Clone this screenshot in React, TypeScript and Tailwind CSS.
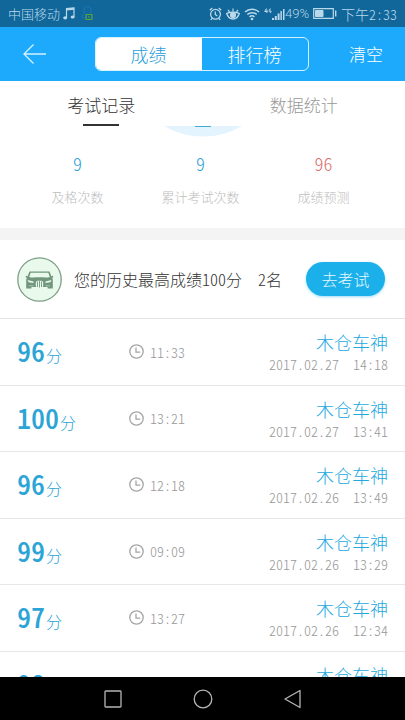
import React from "react";

type ScoreRecord = {
  score: number;
  duration: string;
  rank: string;
  date: string;
  time: string;
};

const records: ScoreRecord[] = [
  { score: 96, duration: "11:33", rank: "木仓车神", date: "2017.02.27", time: "14:18" },
  { score: 100, duration: "13:21", rank: "木仓车神", date: "2017.02.27", time: "13:41" },
  { score: 96, duration: "12:18", rank: "木仓车神", date: "2017.02.26", time: "13:49" },
  { score: 99, duration: "09:09", rank: "木仓车神", date: "2017.02.26", time: "13:29" },
  { score: 97, duration: "13:27", rank: "木仓车神", date: "2017.02.26", time: "12:34" },
  { score: 98, duration: "12:05", rank: "木仓车神", date: "2017.02.26", time: "11:52" },
];

const stats = [
  { value: "9", label: "及格次数", color: "text-[#35a3d8]" },
  { value: "9", label: "累计考试次数", color: "text-[#35a3d8]" },
  { value: "96", label: "成绩预测", color: "text-[#d9716f]" },
];

function StatusBar() {
  return (
    <div className="flex h-[27px] shrink-0 items-center justify-between bg-[#11679a] px-2 text-[13px] text-[#b9d9ea]">
      <div className="flex items-center gap-[3px]">
        <span>中国移动</span>
        <svg width="12" height="13" viewBox="0 0 12 13" fill="none" stroke="currentColor" aria-hidden="true">
          <path d="M3.5 10.5V1.5L11 .8v9" strokeWidth="1.2" />
          <path d="M3.5 2.4L11 1.7" strokeWidth="2" />
          <ellipse cx="2.2" cy="10.8" rx="2" ry="1.6" fill="currentColor" stroke="none" />
          <ellipse cx="9.6" cy="10" rx="2" ry="1.6" fill="currentColor" stroke="none" />
        </svg>
        <svg width="18" height="17" viewBox="0 0 18 17" fill="none" className="ml-[2px]" aria-hidden="true">
          <path d="M5 13H3.500L1.500 12 4 8.500V5a3.500 3.500 0 0 1 7 0v3" stroke="#1478b8" />
          <rect x="6" y="9.500" width="6" height="5" rx=".5" stroke="#5aa53c" strokeWidth="1.200" />
          <path d="M8 12h2" stroke="#5aa53c" />
        </svg>
      </div>
      <div className="flex items-center gap-1">
        <svg width="13" height="14" viewBox="0 0 13 14" fill="none" stroke="currentColor" strokeWidth="1.300" aria-hidden="true">
          <circle cx="6.500" cy="7.300" r="4.900" />
          <path d="M6.300 4.500v3l2 1.500M.8 3.300L3.300 1M12.200 3.300L9.700 1M3 11.300l-1.200 1.700M10 11.300l1.200 1.700" />
        </svg>
        <svg width="14" height="14" viewBox="0 0 14 14" fill="none" stroke="currentColor" strokeWidth="1.400" aria-hidden="true">
          <path d="M.7 6.500C1.500 9 3.500 12 7 12s5.500-3 6.300-5.500C11 4.800 3 4.800.7 6.500z" />
          <circle cx="7" cy="8" r="2.400" fill="currentColor" />
          <path d="M7 4.500V1.500M3.500 4.800L2 2.800M10.500 4.800L12 2.800" strokeWidth="1.200" />
        </svg>
        <svg width="16" height="14" viewBox="0 0 16 14" fill="none" stroke="currentColor" strokeWidth="1.500" aria-hidden="true">
          <path d="M1 5C4.800 1.300 11.200 1.300 15 5M3.300 7.500c2.600-2.500 6.800-2.500 9.400 0M5.500 9.900c1.400-1.300 3.600-1.300 5 0" />
          <circle cx="8" cy="12" r="1.300" fill="currentColor" stroke="none" />
        </svg>
        <svg width="21" height="14" viewBox="0 0 21 14" fill="currentColor" aria-hidden="true">
          <path d="M2.500 1.500L.7 4.500H3.500M2.900 2.500V6M7 2.200C4.500 1 4.500 6 7 5.300V4H6" fill="none" stroke="currentColor" />
          <path d="M8 11h2v2H8zM10.800 9h2v4h-2zM13.600 6.500h2V13h-2zM16.400 4h1.500v9h-1.500zM19 2h1.500v11H19z" />
        </svg>
        <span className="-ml-1 font-['Roboto',sans-serif] text-[13px]">49%</span>
        <svg width="24" height="11" viewBox="0 0 24 11" fill="none" stroke="currentColor" aria-hidden="true">
          <path d="M.7.700h19.600v9.600H.7z" strokeWidth="1.200" />
          <path d="M2.500 2.500h7.500v6h-7.500z" fill="currentColor" />
          <path d="M22.700 2.500v6" strokeWidth="1.400" />
        </svg>
        <span className="text-sm">下午2:33</span>
      </div>
    </div>
  );
}

function Header() {
  return (
    <header className="flex h-[54px] shrink-0 items-center justify-between bg-[#1eaafc] pl-[23px] pr-[21px] text-lg text-white">
      <button type="button" aria-label="返回" className="w-6">
        <svg width="24" height="22" viewBox="0 0 24 22" fill="none" stroke="#d5f2ff" strokeWidth="1.300" aria-hidden="true">
          <path d="M10.500 1.500L1 11l9.500 9.500M1 11h22" />
        </svg>
      </button>
      <div className="ml-2 flex h-[34px] w-[214px] overflow-hidden rounded-md border border-[#d5f2ff]">
        <button type="button" aria-pressed="true" className="flex-1 bg-white leading-8 text-[#2b9dd9]">
          成绩
        </button>
        <button type="button" aria-pressed="false" className="flex-1 leading-8">
          排行榜
        </button>
      </div>
      <button type="button" className="w-9 text-[17px]">清空</button>
    </header>
  );
}

function Tabs() {
  return (
    <div role="tablist" className="grid h-[45px] shrink-0 grid-cols-2 bg-white text-[17px]">
      <button type="button" role="tab" aria-selected="true" className="flex flex-col items-center justify-between pt-3 leading-6 text-[#333]">
        考试记录
        <span className="h-[2px] w-9 bg-[#333]" />
      </button>
      <button type="button" role="tab" aria-selected="false" className="flex flex-col items-center pt-3 leading-6 text-[#999]">
        数据统计
      </button>
    </div>
  );
}

function Summary() {
  return (
    <section className="h-[102px] shrink-0">
      <svg width="78" height="11" viewBox="0 0 78 11" className="mx-auto block" aria-hidden="true">
        <path d="M0 0h78a77 77 0 0 1-78 0z" fill="#e3f4fe" />
        <path d="M31 0h16v1H31z" fill="#45abd0" />
      </svg>
      <dl className="grid grid-cols-3 pl-4 pr-5">
        {stats.map((s) => (
          <div key={s.label} className="flex flex-col-reverse items-center gap-3 pt-[14px]">
            <dt className="text-[13px] leading-5 text-[#bdbdbd]">{s.label}</dt>
            <dd className={`text-lg leading-6 ${s.color}`}>{s.value}</dd>
          </div>
        ))}
      </dl>
    </section>
  );
}

function BestScore() {
  return (
    <section className="flex h-[79px] shrink-0 items-center border-b border-[#e0e4e5] pl-[17px] pr-5">
      <svg width="45" height="45" viewBox="0 0 45 45" fill="none" aria-hidden="true">
        <circle cx="22.500" cy="22.500" r="21.700" fill="#e9faed" stroke="#7d9f88" strokeWidth="1.300" />
        <path
          fill="#71967d"
          d="M12.500 14.500h20l2 5 1-.7c1.200.2.900 1.800-.2 2l.5 2.200v8.500h-5.200v-1.500H14.400v1.500H9.200V23l.6-2.200c-1.300-.2-1.500-1.800-.3-2l1 .7z"
        />
        <path d="M13.700 15.800h17.600l1.500 4.200c-3 .9-6 .3-10.300.3s-7.300.6-10.300-.3z" fill="#e9faed" />
        <path d="M10.500 23l6 1.500v1.400l-4.800-.7zM34.500 23l-6 1.500v1.400l4.800-.7z" fill="#e9faed" />
        <rect x="18.800" y="23.800" width="7.400" height="6.800" rx="2" fill="#e9faed" />
        <path d="M20.500 24.500v5.500M22.500 24v6.500M24.500 24.500v5.500" stroke="#71967d" strokeWidth=".9" />
        <path d="M12 28.800h4.500M28.500 28.800h4.500" stroke="#b5cfbd" strokeWidth=".8" />
      </svg>
      <p className="ml-3 flex-1 whitespace-pre text-base text-[#333]">您的历史最高成绩100分  2名</p>
      <button type="button" className="h-[34px] w-[79px] shrink-0 rounded-full bg-[#1bb0ea] text-base text-[#e5f9ff] shadow-[0_1px_3px_#9bdcf8]">
        去考试
      </button>
    </section>
  );
}

function RecordRow({ record }: { record: ScoreRecord }) {
  return (
    <li className="grid shrink-0 grid-cols-[112px_1fr_auto] items-center border-b border-[#e4e8ea] px-[17px] odd:h-[67px] even:h-[66px]">
      <p className="flex items-baseline pb-1 text-[#2ca4d6]">
        <span className="text-[28px] font-medium leading-9">{record.score}</span>
        <span className="ml-px text-base">分</span>
      </p>
      <p className="flex items-center gap-[6px] pb-px text-sm leading-5 text-[#999]">
        <svg width="15" height="15" viewBox="0 0 15 15" fill="none" stroke="#a5a5a5" strokeWidth="1.300" aria-hidden="true">
          <circle cx="7.500" cy="7.500" r="6.700" />
          <path d="M7 3.500v4.700h4.300" />
        </svg>
        {record.duration}
      </p>
      <div className="text-right">
        <p className="text-lg leading-6 text-[#22a8df]">{record.rank}</p>
        <p className="whitespace-pre text-sm leading-5 text-[#999]">{`${record.date}  ${record.time}`}</p>
      </div>
    </li>
  );
}

function NavigationBar() {
  return (
    <nav className="flex h-[43px] shrink-0 items-center justify-center gap-[70px] bg-black text-[#b5b5b5]">
      <button type="button" aria-label="最近任务">
        <svg width="20" height="20" viewBox="0 0 20 20" fill="none" stroke="currentColor" strokeWidth="1.300" aria-hidden="true">
          <rect x="2" y="2" width="16" height="16" rx=".8" />
        </svg>
      </button>
      <button type="button" aria-label="主屏幕">
        <svg width="20" height="20" viewBox="0 0 20 20" fill="none" stroke="currentColor" strokeWidth="1.300" aria-hidden="true">
          <circle cx="10" cy="10" r="8.800" />
        </svg>
      </button>
      <button type="button" aria-label="返回上一页">
        <svg width="20" height="20" viewBox="0 0 20 20" fill="none" stroke="currentColor" strokeWidth="1.300" strokeLinejoin="round" aria-hidden="true">
          <path d="M17 1.500v17L2 10z" />
        </svg>
      </button>
    </nav>
  );
}

export default function App() {
  return (
    <div className="flex h-screen flex-col bg-white font-['Noto_Sans_CJK_SC',sans-serif] font-light [font-feature-settings:'hwid']">
      <StatusBar />
      <Header />
      <Tabs />
      <main className="flex min-h-0 flex-1 flex-col overflow-hidden">
        <Summary />
        <div className="h-3 shrink-0 bg-[#f4f4f4]" />
        <BestScore />
        <ul className="shrink-0">
          {records.map((r) => (
            <RecordRow key={`${r.date}-${r.time}`} record={r} />
          ))}
        </ul>
      </main>
      <NavigationBar />
    </div>
  );
}
